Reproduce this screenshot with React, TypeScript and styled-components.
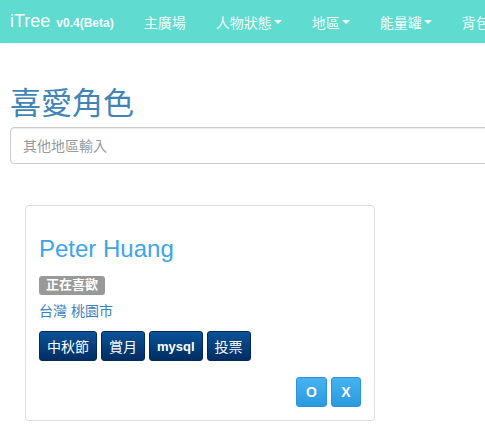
import React from "react";
import styled, { createGlobalStyle } from "styled-components";

const Global = createGlobalStyle`
  html, body { margin: 0; padding: 0; overflow: hidden; background: #fff; }
  body {
    font-family: "Liberation Sans", "Noto Sans CJK TC", Arial, sans-serif;
    font-size: 14px;
    color: #333;
  }
  * { box-sizing: border-box; }
`;

const Navbar = styled.nav`
  display: flex;
  align-items: center;
  height: 43px;
  width: 700px;
  padding-left: 10px;
  background: #5fdbcf;
  box-shadow: 0 1px 2px rgba(0, 0, 0, 0.07);
  white-space: nowrap;
`;

const Brand = styled.a`
  display: flex;
  align-items: baseline;
  gap: 6px;
  padding-right: 15px;
  color: rgba(255, 255, 255, 0.95);
  font-size: 18px;
  text-decoration: none;
`;

const Version = styled.small`
  font-size: 12px;
  font-weight: bold;
`;

const NavLink = styled.a`
  display: flex;
  align-items: center;
  padding: 0 15px;
  color: rgba(255, 255, 255, 0.92);
  font-size: 14px;
  text-decoration: none;
`;

const Caret = styled.span`
  display: inline-block;
  margin-left: 2px;
  width: 0;
  height: 0;
  border-top: 4px solid rgba(255, 255, 255, 0.92);
  border-left: 4px solid transparent;
  border-right: 4px solid transparent;
`;

const Container = styled.main`
  width: 700px;
  padding: 0 10px;
`;

const Title = styled.h1`
  margin: 41px 0 9px;
  font-size: 31px;
  font-weight: 400;
  line-height: 1.1;
  color: #4284b6;
  font-family: "Noto Sans CJK TC", sans-serif;
`;

const SearchInput = styled.input`
  display: block;
  width: 100%;
  height: 37px;
  padding: 6px 12px;
  font-size: 14px;
  font-family: "Liberation Sans", "Noto Sans CJK TC", sans-serif;
  border: 1px solid #ccc;
  border-radius: 4px;
  box-shadow: inset 0 1px 1px rgba(0, 0, 0, 0.075);
  &::placeholder { color: #999; }
`;

const Card = styled.section`
  margin: 41px 0 0 15px;
  width: 350px;
  padding: 13px 13px 13px;
  border: 1px solid #ddd;
  border-radius: 4px;
`;

const Name = styled.h2`
  margin: 17px 0 14px;
  font-size: 24px;
  font-weight: 400;
  line-height: 1.1;
  color: #3ea4e9;
`;

const Label = styled.span`
  display: inline-block;
  padding: 2px 7px 3px;
  font-size: 13px;
  line-height: 14px;
  font-weight: bold;
  color: #fff;
  background: #999;
  border-radius: 3px;
`;

const Location = styled.div`
  margin-top: 6px;
  line-height: 20px;
  color: #3a84bd;
`;

const TagRow = styled.div`
  display: flex;
  gap: 4px;
  margin-top: 10px;
`;

const TagButton = styled.button<{ $latin?: boolean }>`
  height: 30px;
  padding: 0 7px;
  font-size: ${(p) => (p.$latin ? "13px" : "14px")};
  font-weight: ${(p) => (p.$latin ? "bold" : "normal")};
  font-family: "Liberation Sans", "Noto Sans CJK TC", sans-serif;
  color: #fff;
  background: linear-gradient(#0a5298, #002d61);
  border: 1px solid #00285a;
  border-radius: 3px;
`;

const ActionRow = styled.div`
  display: flex;
  justify-content: flex-end;
  gap: 4px;
  margin-top: 16px;
`;

const ActionButton = styled.button`
  height: 30px;
  padding: 0 9px;
  min-width: 30px;
  font-size: 14px;
  font-weight: bold;
  font-family: "Liberation Sans", sans-serif;
  color: #fff;
  background: linear-gradient(#48b2ef, #2a9ae0);
  border: 1px solid #2a95d8;
  border-radius: 3px;
`;

export default function App() {
  return (
    <>
      <Global />
      <Navbar>
        <Brand href="#">
          iTree <Version>v0.4(Beta)</Version>
        </Brand>
        <NavLink href="#">主廣場</NavLink>
        <NavLink href="#">人物狀態<Caret /></NavLink>
        <NavLink href="#">地區<Caret /></NavLink>
        <NavLink href="#">能量罐<Caret /></NavLink>
        <NavLink href="#">背包</NavLink>
      </Navbar>
      <Container>
        <Title>喜愛角色</Title>
        <SearchInput placeholder="其他地區輸入" />
        <Card>
          <Name>Peter Huang</Name>
          <Label>正在喜歡</Label>
          <Location>台灣 桃園市</Location>
          <TagRow>
            <TagButton>中秋節</TagButton>
            <TagButton>賞月</TagButton>
            <TagButton $latin>mysql</TagButton>
            <TagButton>投票</TagButton>
          </TagRow>
          <ActionRow>
            <ActionButton>O</ActionButton>
            <ActionButton>X</ActionButton>
          </ActionRow>
        </Card>
      </Container>
    </>
  );
}
